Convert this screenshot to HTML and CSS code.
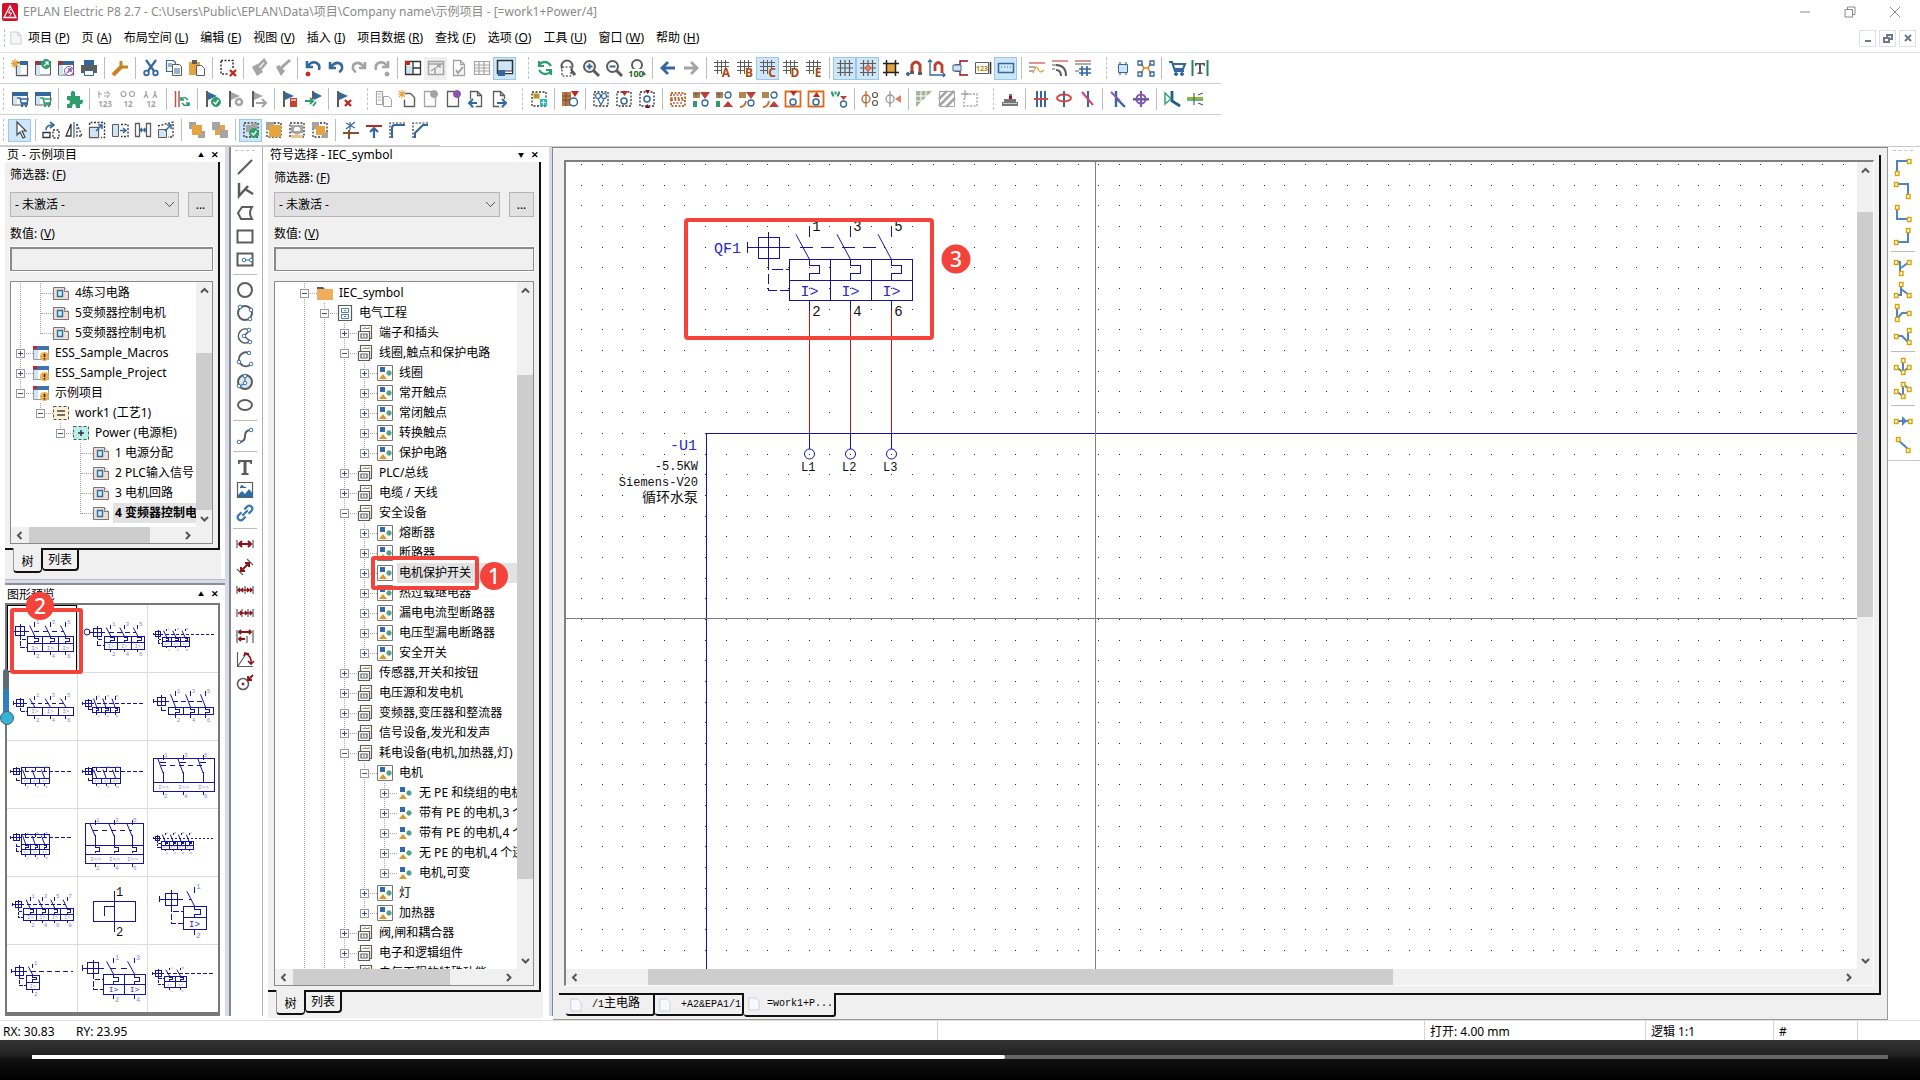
FILE: index.html
```html
<!DOCTYPE html>
<html lang="zh-CN">
<head>
  <meta charset="UTF-8">
  <meta name="viewport" content="width=device-width, initial-scale=1.0">
  <title>EPLAN Electric P8 2.7</title>
  <link rel="stylesheet" href="styles.css">
</head>
<body>
  <header>
    <div class="titlebar">
      <svg class="logo" viewBox="0 0 16 18"><rect width="16" height="18" rx="2" fill="#d2102e"/><path d="M8 3 14 14.500H2z" fill="none" stroke="#fff" stroke-width="1.300"/><path d="M8.500 6 6.500 10h3L7.500 13.500" fill="none" stroke="#fff"/></svg>
      <span class="app-title">EPLAN Electric P8 2.7 - C:\Users\Public\EPLAN\Data\项目\Company name\示例项目 - [=work1+Power/4]</span>
      <div class="win-buttons">
        <button aria-label="Minimize"><svg viewBox="0 0 12 12"><path d="M1 6h10"/></svg></button>
        <button aria-label="Restore"><svg viewBox="0 0 12 12"><path d="M1 3.500h7.500V11H1zM3.500 3.500V1H11v7.500H8.500"/></svg></button>
        <button aria-label="Close"><svg viewBox="0 0 12 12"><path d="M1 1l10 10M11 1 1 11"/></svg></button>
      </div>
    </div>
    <nav class="menubar">
      <span class="grip"></span>
      <svg class="page-icon" viewBox="0 0 14 16"><path d="M1 1h8l4 4v10H1z" fill="#f4f6fa" stroke="#c3c8d2"/><path d="M9 1v4h4" fill="none" stroke="#c3c8d2"/></svg>
      <a href="#">项目 (<u>P</u>)</a>
      <a href="#">页 (<u>A</u>)</a>
      <a href="#">布局空间 (<u>L</u>)</a>
      <a href="#">编辑 (<u>E</u>)</a>
      <a href="#">视图 (<u>V</u>)</a>
      <a href="#">插入 (<u>I</u>)</a>
      <a href="#">项目数据 (<u>R</u>)</a>
      <a href="#">查找 (<u>F</u>)</a>
      <a href="#">选项 (<u>O</u>)</a>
      <a href="#">工具 (<u>U</u>)</a>
      <a href="#">窗口 (<u>W</u>)</a>
      <a href="#">帮助 (<u>H</u>)</a>
      <div class="mdi-buttons">
        <button aria-label="Minimize page"><svg viewBox="0 0 10 10"><path d="M2 8h6"/></svg></button>
        <button aria-label="Restore page"><svg viewBox="0 0 10 10"><path d="M1 5h5v4H1zM4 5V2h5v4H6"/></svg></button>
        <button aria-label="Close page"><svg viewBox="0 0 10 10"><path d="M2 2l6 6M8 2 2 8"/></svg></button>
      </div>
    </nav>
    <div class="toolbar" data-tools=": new open edit print | wrench | cut copy paste | marquee | brush brushFill | undoAll undo redo redoAll | layout fullview# check table winBottom* : refresh zoomArea zoomIn zoomOut zoom100 | back forward | gridA gridB gridC* gridD gridE | grid* snap* alignGrid magnet magnetXY orthogonal dims input* | wave1 wave2 wave3 : device net | cart textT"></div>
    <div class="toolbar" data-tools=": navCart navCart2 | puzzle | num1 num2 num3 | sync | flagOk flagGear flagNext | flagRed flagSplit | flagDel : pages pageNew pageOff pageMark pagePrev pageNext : macroBox | macroRed | conn1 conn2 conn3 | term term2 term3 term4 term5 boxDown boxUp chain | pin1 pin2 | corner hatch newBox : stamp | bus cable slash | branch ring | diode splice"></div>
    <div class="toolbar last" data-tools=": pointer* | rotate mirror scale move stretch resize | front back2 | grpOk* grp1 grp2 grp3 | trim extend chamfer fillet"></div>
  </header>

  <main>
    <div class="left-col">
      <section class="panel pages">
        <div class="panel-title"><span>页 - 示例项目</span><button aria-label="Collapse">▲</button><button aria-label="Close panel">✕</button></div>
        <div class="panel-body">
          <label for="pageFilter">筛选器: (<u>F</u>)</label>
          <div class="filter-row">
            <select id="pageFilter"><option>- 未激活 -</option></select>
            <button>...</button>
          </div>
          <label for="pageValue">数值: (<u>V</u>)</label>
          <input type="text" id="pageValue">
          <div class="scroll-box">
            <ul class="tree" id="pageTree"></ul>
            <div class="scroll v" data-split="54 159 0"></div>
            <div class="scroll h" data-split="1 122 29"></div>
          </div>
        </div>
        <div class="tabs"><button class="on">树</button><button>列表</button></div>
      </section>
      <div class="splitter-h"></div>
      <section class="panel preview">
        <div class="panel-title"><span>图形预览</span><button aria-label="Collapse">▲</button><button aria-label="Close panel">✕</button></div>
        <div class="thumbs" id="thumbs"></div>
        <div class="mark mark-2"><b>2</b></div>
        <div class="gauge"></div>
      </section>
    </div>
    <div class="splitter-v"></div>
    <div class="vtools" data-tools=": line polyline polygon rect rectC | circle circle3 arcC arc3 sector ellipse | spline | text image link | dim dimAlign dimChain dimInc dimBase dimAngle dimRadius"></div>

    <section class="panel symbols">
      <div class="panel-title"><span>符号选择 - IEC_symbol</span><button aria-label="Collapse">▼</button><button aria-label="Close panel">✕</button></div>
      <div class="panel-body">
        <label for="symFilter">筛选器: (<u>F</u>)</label>
        <div class="filter-row">
          <select id="symFilter"><option>- 未激活 -</option></select>
          <button>...</button>
        </div>
        <label for="symValue">数值: (<u>V</u>)</label>
        <input type="text" id="symValue">
        <div class="scroll-box">
          <ul class="tree deep" id="symTree"></ul>
          <div class="scroll v" data-split="76 505 73"></div>
          <div class="scroll h" data-split="1 158 50"></div>
        </div>
      </div>
      <div class="tabs"><button class="on">树</button><button>列表</button></div>
    </section>
    <div class="splitter-v thin"></div>

    <section class="editor">
      <div class="doc">
        <div class="scroll-box">
          <svg class="sheet" id="sheet"></svg>
          <div class="scroll v" data-split="33 406 335"></div>
          <div class="scroll h" data-split="65 745 447"></div>
        </div>
      </div>
      <div class="doc-tabs">
        <button><svg class="page-icon" viewBox="0 0 14 16"><path d="M1 1h8l4 4v10H1z" fill="#f8f9fc" stroke="#c3c8d2"/></svg><span>/1<span class="cjk">主电路</span></span></button>
        <button><svg class="page-icon" viewBox="0 0 14 16"><path d="M1 1h8l4 4v10H1z" fill="#f8f9fc" stroke="#c3c8d2"/></svg><span>+A2&amp;EPA1/1</span></button>
        <button class="on"><svg class="page-icon" viewBox="0 0 14 16"><path d="M1 1h8l4 4v10H1z" fill="#f8f9fc" stroke="#c3c8d2"/></svg><span>=work1+P...</span></button>
      </div>
    </section>
    <div class="vtools right" data-tools=": angleRD angleLD angleRU angleLU | teeD teeU teeR teeL | jumpD jumpZ | arrowR diag"></div>
  </main>

  <div class="status">
    <span class="rx">RX: 30.83</span><span class="ry">RY: 23.95</span>
    <span class="st-open">打开: 4.00 mm</span><span class="st-logic">逻辑 1:1</span><span class="st-hash">#</span><span class="st-end"></span>
  </div>
  <footer class="player">
    <div class="progress"><i></i></div>
  </footer>
  <script src="script.js"></script>
</body>
</html>
```
FILE: styles.css
```css
* { box-sizing: border-box; }
body {
  margin: 0;
  height: 100vh;
  display: flex;
  flex-direction: column;
  overflow: hidden;
  background: #fff;
  color: #000;
  font: 12px/16px "Noto Sans", "Noto Sans CJK SC", sans-serif;
}
button, input, select { font: inherit; color: inherit; padding: 0; border-radius: 0; }
button { background: none; border: none; }
a { color: inherit; text-decoration: none; }
svg { display: block; }

/* title + menu */
.titlebar { display: flex; align-items: center; height: 24px; padding-left: 2px; color: #8a8a8a; }
.logo { width: 16px; height: 18px; margin-right: 5px; }
.app-title { flex: 1; white-space: nowrap; }
.win-buttons { display: flex; }
.win-buttons button { width: 45px; display: grid; place-items: center; }
.win-buttons svg { width: 12px; height: 12px; fill: none; stroke: #8a8a8a; }
.win-buttons button:last-child { margin-right: 3px; }
.menubar { display: flex; align-items: center; gap: 12px; height: 29px; border-bottom: 1px solid #e2e2e2; white-space: nowrap; }
.menubar .grip { height: 18px; margin: 0 -7px 0 4px; }
.grip { border-left: 1px dashed #c4c4c4; }
.page-icon { width: 14px; height: 16px; flex: none; }
.menubar .page-icon { width: 12px; margin-right: -6px; }
.mdi-buttons { display: flex; gap: 3px; margin: 0 4px 0 auto; }
.mdi-buttons button { width: 17px; height: 17px; border: 1px solid #dde1e6; display: grid; place-items: center; }
.mdi-buttons svg { width: 10px; height: 10px; fill: none; stroke: #6c7a89; stroke-width: 2; }

/* toolbars */
.toolbar { display: flex; align-items: center; width: 1221px; max-width: 100%; height: 31px; border-bottom: 1px solid #d0d0d0; overflow: hidden; }
.toolbar.last { width: 440px; }
.tool { width: 23px; height: 23px; flex: none; display: grid; place-items: center; border: 1px solid transparent; }
.tool svg { width: 18px; height: 18px; overflow: visible; }
.tool.on { background: #cfe6f8; border-color: #98c8ee; }
.tool.dim { background: #efefef; }
.sep { width: 8px; height: 22px; flex: none; background: linear-gradient(90deg, transparent 4px, #bdbdbd 4px, #bdbdbd 5px, transparent 5px); }
.toolbar .grip { height: 22px; width: 5px; flex: none; margin-left: 12px; }
.toolbar .grip:first-child { margin-left: 3px; }

/* work area */
main { flex: 1; min-height: 0; display: grid; grid-template-columns: 225px 6px 32px 286px 4px 1fr 32px; border-top: 1px solid #c8c8c8; }
.left-col { display: flex; flex-direction: column; min-height: 0; padding-left: 5px; }
.splitter-v { background: #d6dbe9; border-right: 2px solid #86868c; margin-bottom: 4px; }
.splitter-v.thin { border-right-width: 1px; }
.splitter-h { height: 6px; flex: none; background: #d6dbe9; border-top: 1px solid #b8bccb; border-bottom: 2px solid #8b8f9c; }
.panel { display: flex; flex-direction: column; min-height: 0; background: #fff; position: relative; }
.panel.pages { height: 432px; flex: none; }
.panel.preview { flex: 1; padding-bottom: 4px; }
.panel.symbols { padding: 0 8px 2px 5px; }
.panel-title { display: flex; align-items: center; height: 15px; flex: none; padding: 0 6px 0 2px; gap: 6px; }
.panel-title span { flex: 1; line-height: 15px; }
.panel-title button { width: 8px; font-size: 9px; line-height: 10px; }
.panel-title button:nth-of-type(1) { font-size: 6px; }
.panel-title button:nth-of-type(2) { font-weight: bold; }
.panel-body {
  flex: 1;
  min-height: 0;
  display: flex;
  flex-direction: column;
  background: #f0f0f0;
  border-right: 2px solid #111;
  border-bottom: 2px solid #111;
  padding: 5px 5px 4px 5px;
  margin-right: 5px;
}
.panel.symbols .panel-body { margin-right: 0; padding-left: 6px; }
.panel.symbols .panel-title { padding-right: 2px; }
.panel-body label { flex: none; }
.panel.symbols label:first-child { padding-top: 3px; margin-bottom: -3px; }
.filter-row { display: flex; gap: 9px; margin: 9px 0; flex: none; }
.filter-row select {
  flex: 1;
  min-width: 0;
  height: 25px;
  border: 1px solid #b4b4b4;
  background: #e1e1e1;
  padding-left: 4px;
  appearance: none;
  background-image: linear-gradient(45deg, transparent 46%, #555 46%, #555 56%, transparent 56%), linear-gradient(-45deg, transparent 46%, #555 46%, #555 56%, transparent 56%);
  background-size: 5px 5px;
  background-repeat: no-repeat;
  background-position: right 8px center, right 4px center;
}
.filter-row button { width: 25px; height: 25px; border: 1px solid #b4b4b4; background: #e1e1e1; }
.panel-body input { height: 24px; flex: none; margin-top: 5px; border: 2px solid #8a8a8a; border-right-width: 1px; border-bottom-width: 1px; outline: 1px solid #fff; background: #f0f0f0; width: 100%; }
.scroll-box { flex: 1; min-height: 0; min-width: 0; display: grid; grid-template: minmax(0, 1fr) 16px / minmax(0, 1fr) 16px; background: #f0f0f0; border: 1px solid #8a8a8a; }
.panel-body .scroll-box { margin-top: 10px; }

/* scrollbars */
.scroll { display: flex; background: #f0f0f0; }
.scroll.v { flex-direction: column; }
.scroll button { width: 16px; height: 17px; flex: none; display: grid; place-items: center; }
.scroll.h button { width: 17px; height: 16px; }
.scroll svg { width: 9px; height: 9px; fill: none; stroke: #555; stroke-width: 2; }
.scroll i { flex-basis: 0; }
.scroll .thumb { background: #cdcdcd; }

/* trees */
.tree { list-style: none; margin: 0; padding: 1px 0 0; background: #fff; overflow: hidden; white-space: nowrap; }
.tree.deep { padding-left: 20px; }
.tree li { display: flex; height: 20px; align-items: center; position: relative; }
.tree li > i { position: relative; width: 20px; height: 20px; flex: none; }
.tree i.line, .tree i.half { background: linear-gradient(#a8a8a8 50%, transparent 50%) 9px 0 / 1px 2px repeat-y; }
.tree i.half::before { content: ""; position: absolute; left: 0; top: 11px; width: 20px; height: 9px; background: #fff; }
.tree i.stub::after { content: ""; position: absolute; left: 10px; top: 10px; width: 12px; border-top: 1px dotted #a8a8a8; }
.tree button { position: absolute; z-index: 1; left: 5px; top: 6px; width: 9px; height: 9px; border: 1px solid #9a9a9a; background: linear-gradient(#3a5080, #3a5080) center / 5px 1px no-repeat, #fff; }
.tree button.plus { background: linear-gradient(#3a5080, #3a5080) center / 5px 1px no-repeat, linear-gradient(#3a5080, #3a5080) center / 1px 5px no-repeat, #fff; }
.tree li > svg { position: relative; width: 18px; height: 18px; flex: none; margin: 0 3px 0 1px; }
.tree span { padding: 1px 1px 1px 2px; line-height: 18px; }
.tree .sel { background: #e2e2e2; flex: 1; }
.tree .strong { font-weight: bold; }

/* tabs under panels */
.tabs { display: flex; align-items: flex-start; height: 29px; flex: none; background: #f0f0f0; padding-left: 8px; margin-right: 4px; }
.tabs button { height: 21px; padding: 0 5px; border: solid #111; border-width: 0 2px 2px 1px; border-radius: 0 0 4px 4px; background: #f0f0f0; }
.tabs .on { height: 25px; width: 29px; border-width: 0 1px 2px 1px; border-left-color: #999; margin-top: -2px; padding-top: 4px; }
.panel.symbols .tabs { margin-right: -2px; height: 26px; }

/* preview grid */
.panel.preview .panel-title { height: 18px; }
.thumbs { flex: 1; min-height: 0; margin-right: 5px; display: grid; grid-template-columns: repeat(3, 1fr); grid-template-rows: repeat(6, 1fr); gap: 1px; background: #dcdcdc; border: 2px solid #777; border-bottom-width: 4px; }
.thumbs button { background: #fff; display: block; min-height: 0; overflow: hidden; text-align: left; }
.thumbs button.on { outline: 1px solid #000; outline-offset: -1px; }
.thumbs svg { width: 70px; height: 67px; }
.draw { fill: none; stroke: #1414a0; shape-rendering: crispEdges; }
.slant { fill: none; stroke: #1414a0; }
.draw-text { font-family: "Liberation Mono", "Noto Sans CJK SC", monospace; fill: #111; }
.draw-text.blue { fill: #2a2acc; }
.draw-text.soft { fill: #8a8ad8; }

/* numbered callouts */
.mark { position: absolute; border: 4px solid #f4433a; border-radius: 3px; pointer-events: none; }
.mark b { position: absolute; width: 28px; height: 28px; border-radius: 50%; background: #f4433a; color: #fff; font-size: 21px; line-height: 28px; font-weight: 500; text-align: center; }
.mark-1 { left: 76px; top: -7px; width: 108px; height: 34px; z-index: 3; }
.mark-1 b { left: 105px; top: 2px; }
.mark-2 { left: 5px; top: 23px; width: 73px; height: 66px; }
.mark-2 b { left: 12px; top: -20px; }
.gauge { position: absolute; left: -2px; top: 84px; width: 6px; height: 48px; border-radius: 3px; background: linear-gradient(#5f6b73 20px, #2f7fc0 20px); }
.gauge::after { content: ""; position: absolute; left: -3px; bottom: -8px; width: 12px; height: 12px; border-radius: 50%; background: #34b3d4; border: 1px solid #46606e; }

/* vertical tool strips */
.vtools { display: flex; flex-direction: column; align-items: center; border-right: 1px solid #b0b0b0; padding: 3px 3px 5px 0; margin-bottom: 4px; }
.vtools.right { align-self: start; border-right: none; border-bottom: 1px solid #c8c8c8; margin: 0; }
.vtools .sep { width: 24px; height: 8px; background: linear-gradient(transparent 4px, #bdbdbd 4px, #bdbdbd 5px, transparent 5px); }
.vtools .grip { border: none; border-top: 1px dashed #c4c4c4; width: 20px; height: 5px; flex: none; }

/* editor */
.editor { display: flex; flex-direction: column; min-width: 0; min-height: 0; background: #f0f0f0; border-top: 1px solid #888; border-right: 1px solid #999; border-bottom: 1px solid #999; }
.doc { flex: 1; min-height: 0; display: flex; margin: 7px 6px 0 6px; border-right: 2px solid #111; border-bottom: 2px solid #111; padding: 5px 5px 7px 5px; }
.doc .scroll-box { border: 2px solid #808080; border-right: 1px solid #fff; border-bottom: 1px solid #fff; }
.sheet { width: 100%; height: 100%; background: #fff; min-width: 0; }
.doc-tabs { display: flex; align-items: flex-start; height: 24px; flex: none; padding-left: 13px; font: 10px/14px "Liberation Mono", "Noto Sans CJK SC", monospace; }
.doc-tabs .cjk { font-size: 12px; }
.doc-tabs button { display: flex; align-items: center; gap: 10px; width: 89px; height: 21px; padding-left: 4px; border: solid #111; border-width: 0 2px 2px 0; border-radius: 0 0 3px 3px; }
.doc-tabs .on { width: 92px; height: 24px; margin-top: -2px; gap: 7px; background: #f0f0f0; }
.doc-tabs .page-icon { width: 12px; height: 14px; }

/* status + player */
.status { display: flex; height: 20px; flex: none; padding-left: 3px; line-height: 22px; border-top: 1px solid #e0e0e0; }
.status span { border-left: 1px solid #d4d4d4; padding-left: 5px; white-space: nowrap; }
.status .rx { border: none; padding: 0; width: 73px; }
.status .ry { border: none; border-right: 1px solid #d4d4d4; padding: 0; width: 862px; }
.status .st-open { margin-left: auto; width: 221px; }
.status .st-logic { width: 128px; }
.status .st-hash { width: 84px; }
.status .st-end { width: 63px; }
.player { height: 40px; flex: none; background: linear-gradient(#333, #222 15px, #111 19px, #000); padding: 15px 32px; }
.progress { height: 4px; background: #666; }
.progress i { display: block; width: 52.400%; height: 4px; background: #fff; border-radius: 0 2px 2px 0; }
```
FILE: script.js
```js
(function() {
  const G = '#5c5c5c', B = '#33689e', R = '#c0281e', O = '#e6a440', N = '#2f9e6c', S = '#a4a4a4', C = '#cfe4f5', P = '#8a55b0', K = '#8e1118';
  // s = stroked path, f = filled path
  const s = (d, c = G, w = 1.5, x = '') => `<path d="${d}" fill="none" stroke="${c}" stroke-width="${w}" ${x}/>`;
  const f = (d, c = G) => `<path d="${d}" fill="${c}"/>`;
  const o = (x, y, r, c = G, w = 1.5, fill = 'none') => `<circle cx="${x}" cy="${y}" r="${r}" fill="${fill}" stroke="${c}" stroke-width="${w}"/>`;
  const t = (str, x, y, c, size) => `<text x="${x}" y="${y}" fill="${c}" font-size="${size}" font-weight="bold" text-anchor="middle">${str}</text>`;
  const dash = 'stroke-dasharray="2 1.5"';

  const win = f('M1 2h16v4H1z', B) + f('M1 2h4v4H1z', R) + s('M1.500 3v13h15V3', G, 1) + f('M2 6h4v10H2z', C);
  const winPlain = f('M1 2h16v4H1z', B) + s('M1.500 3v12h15V3', G, 1) + f('M2 6h4v8H2z', C);
  const sheet = (c) => s('M3.500 1.500h7l4 4v11h-11zM10.500 1.500v4h4', c, 1.3);
  const flag = (c) => f('M2 1h2v16H2z', G) + f('M4 2l9 4-9 4z', c);
  const hash = s('M4.500 1v14M8.500 1v14M12.500 1v8M1 3.500h15M1 7.500h15M1 11.500h7', G, 1);
  const gridLines = s('M4.500 1v16M9 1v16M13.500 1v16M1 4.500h16M1 9h16M1 13.500h16', G, 1.2);
  const lens = (c) => o(7.500, 7.500, 5.500, c, 2) + s('M11.500 11.500 17 17', c, 3);
  const cart = (c) => s('M6 8h3l1.500 6H16M10 9h7l-1 4h-5.500', c, 1.5) + f('M10 15h2v2h-2zM14 15h2v2h-2z', c);
  const tick = o(12, 12, 4.500, N, 1, N) + s('M9.500 12l2 2 3-4', '#fff', 1.4);
  const cross = s('M10 10l6 6M16 10l-6 6', R, 2.4);
  const box = s('M2 2h14v14H2z', '#333', 1.3, dash);
  const pins = f('M6 1h7L9.500 6z', R);
  const relay = f('M1 2h7v6H1z', '#b0854e') + s('M1 4h7M4 2v6', G, .8) + f('M1 11h4v6H1z', N);
  const tri = f('M8 2h10l-5 7z', '#b8423a');
  const triUp = f('M8 17h10l-5-6z', '#b8423a');
  const q = (x, y) => `<rect x="${x - 1.5}" y="${y - 1.5}" width="3.500" height="4" fill="#fff" stroke="#d6a400" stroke-width="1.400"/>`;
  const wire = (d, pts) => s(d, '#4f84c4', 2) + pts.map(p => q(p[0], p[1])).join('');
  const letter = (l) => hash + t(l, 13, 18, '#a84a10', 12);
  const node = (x, y) => o(x, y, 1.8, '#3572ad', 1, '#fff');

  const icons = {
    new: s('M5.500 3.500h11v13h-11z', G, 1.3) + f('M9 2h8v4H9z', B) + f('M6 6h4v10H6z', C) + s('M4 0v9M0 4.500h9M1 1.500l6 6M7 1.500l-6 6', O, 1.3),
    open: win + o(12, 5, 4.5, N, 1, N) + s('M10 7l4-4M11 3h3v3', '#fff', 1.2),
    edit: win + o(12, 12, 4.5, P, 1, '#fff') + s('M10 14l4-4M11 10h3v3', P, 1.5),
    print: f('M4 1h10v5H4z', B) + f('M1 6h16v8H1z', G) + `<path d="M4.500 11.500h9v5h-9z" fill="#fff" stroke="${B}"/>`,
    wrench: s('M2 16 11 7', '#c98324', 4) + s('M10 2v6h7', '#c98324', 3),
    cut: s('M4 1l8 11M14 1 6 12', B, 2.2) + o(4.5, 14, 2.3, B, 1.8) + o(13.5, 14, 2.3, B, 1.8),
    copy: s('M1.500 1.500h7l2 2v9h-9z', B, 1.2) + `<path d="M7.500 5.500h7l2 2v9h-9z" fill="#fff" stroke="${G}"/>` + s('M3 5h4M3 7h4M9 10h6M9 12h6M9 14h6', B, 1),
    paste: f('M1 3h11v13H1z', O) + f('M4 1h5v4H4z', G) + `<path d="M8.500 6.500h5l3 3v7h-8z" fill="#fff" stroke="${G}"/>`,
    marquee: s('M2 1.500h12v8M2 2v13h8', '#333', 1.5, dash) + s('M11 11l6 6M17 11l-6 6', R, 2.4),
    brush: s('M7 8l7-7 2 3-6 7z', S, 2.5) + f('M2 8l5-3 6 8-6 4z', S),
    brushFill: s('M17 1 8 9', S, 3) + f('M3 8l3-2 6 6-4 5z', S),
    undo: s('M3 3v6h6', B, 2.6) + s('M4 8C9 1 16 4 15 10q-1 2-3 3', B, 2.6),
    undoAll: s('M3 2v6h6', B, 2.6) + s('M4 7C9 0 17 4 15 11', B, 2.6) + o(4, 15, 2, R, 1, R),
    redo: s('M15 3v6H9', S, 2.6) + s('M14 8C9 1 2 4 3 10q1 2 3 3', S, 2.6),
    redoAll: s('M15 2v6H9', S, 2.6) + s('M14 7C9 0 1 4 3 11', S, 2.6) + o(14, 15, 2, S, 1, S),
    layout: f('M2 7h6v8H2z', C) + s('M1.500 2.500h15v13h-15zM9 3v13M9 9h8', '#333', 1.3) + f('M1 2h5v4H1z', R),
    fullview: s('M1.500 2.500h15v13h-15zM1 5h16M8 9v6M4 12l9-6M10 6h3v3', S, 1.5),
    check: sheet(S) + s('M6 11l2 3 5-6', S, 2),
    table: s('M1.500 2.500h15v13h-15zM1 6h16M1 9h16M1 12h16M6 2v14M11 2v14', S, 1.2),
    winBottom: s('M1.500 1.500h15v13h-15z', '#333', 1.5) + f('M2 11h7v6H2z', B) + f('M9 12h7v2H9z', '#fff') + s('M9 12h7', '#333', 1),
    refresh: s('M15 7Q11 1 5 4L3 7M3 2v5h5M3 11q4 6 10 3l2-3M15 16v-5h-5', N, 2.2),
    zoomArea: o(8, 7, 5.5, G, 2) + s('M12 11l4 5', G, 3) + `<path d="M3 8h9v9H3z" fill="#fff" stroke="#222" ${dash}/>`,
    zoomIn: lens(G) + s('M4.500 7.500h6M7.500 4.500v6', B, 2),
    zoomOut: lens(G) + s('M4.500 7.500h6', B, 2),
    zoom100: o(9, 6, 5, G, 2) + s('M12 10l5 6', G, 2.5) + f('M1 10h14v8H1z', '#fff') + t('100', 8, 18, '#1e6a28', 9),
    back: s('M16 9H4M9 3 3 9l6 6', B, 2.8), forward: s('M2 9h12M9 3l6 6-6 6', S, 2.8),
    gridA: letter('A'), gridB: letter('B'), gridC: letter('C'), gridD: letter('D'), gridE: letter('E'),
    grid: gridLines,
    snap: gridLines + o(9, 9, 2.5, '#d9652b', 1, '#e77'),
    alignGrid: f('M4 4h10v10H4z', O) + s('M4.500 1v16M13.500 1v16M1 4.500h16M1 13.500h16', '#222', 1.5),
    magnet: s('M7 13V6q4-6 8 0v9', '#b4432f', 3) + o(3, 15, 1.5, B, 1, B) + f('M5 12h4v3H5zM13 13h4v3h-4z', G),
    magnetXY: s('M2 1v15h15M0 3l2-2 2 2M15 14l2 2-2 2', B, 1.3) + s('M7 12V6q3-5 7 0v8', '#b4432f', 2.8),
    orthogonal: s('M17 2H9v4H4M17 16H9v-4H4', K, 1.4) + `<path d="M2 6h8v6H2z" fill="${C}" stroke="${B}"/>`,
    dims: s('M1.500 3.500h13v11h-13z', G, 1) + t('123', 8, 12, '#b88a00', 7) + s('M16.500 3v12', '#333', 1.6),
    input: s('M1.500 4.500h15v9h-15z', B, 1.5) + s('M4 8h10', B, 1, 'stroke-dasharray="1 2"'),
    wave1: s('M1 8h6', G, 1) + s('M1 4h16', R, 1) + s('M1 12h4', G, 1) + s('M5 14q3-9 5-4t6 1', O, 1.5),
    wave2: s('M1 2h16', R, 1) + s('M1 6h5M1 10h3', G, 1) + s('M5 6q10 0 10 11M5 11q5 0 5 6', G, 2),
    wave3: s('M1 2h16', R, 1) + s('M1 5h16', G, 1) + s('M8 7v10M13 7v10M5 10h12M5 14h12', B, 1.7) + s('M1 12h4', G, 1),
    device: `<path d="M4.500 5.500h9v8h-9z" fill="${C}" stroke="${B}"/>` + s('M6 3v2M12 3v2M6 14v2M12 14v2', B, 1.2),
    net: s('M4 4l3 5-3 6M14 4l-3 5 3 6M7 9h4', '#d08a2a', 1.5) + s('M1 2h4v4H1zM13 2h4v4h-4zM1 13h4v4H1zM13 13h4v4h-4z', B, 1.3),
    cart: s('M1 3h3l3 9h9M5 5h12l-2 5H6', B, 2.2) + o(8, 15, 1.5, B, 1, B) + o(14, 15, 1.5, B, 1, B),
    textT: s('M1.500 1v16M16.500 1v16', '#2a8064', 2) + f('M4 4h10v3h-1l-1-1.500h-2v8h1.500V15h-5v-1.500H8v-8H6L5 7H4z', '#555'),

    navCart: winPlain + cart(B), navCart2: winPlain + cart(N),
    puzzle: f('M2 6h4q-1-5 2-5t2 5h5v4q4-1 3 2t-3 2v4h-4q0-4-2-4t-2 4H2v-4q3 0 3-2T2 10z', N),
    num1: s('M3 1v7M2 4h4M11 1q5 3 0 7M8 3h5M8 6h5', S, 1) + t('123', 9, 17, S, 8),
    num2: o(4.5, 4, 2.5, S, 1.2) + o(13, 4, 2.5, S, 1.2) + t('12', 9, 17, S, 8),
    num3: s('M4 1v4M13 1v4M2 8l2-4 2 4M11 8l2-4 2 4', S, 1.4) + t('12', 9, 17, S, 8),
    sync: s('M2.500 1v16M6 1v16', '#b9544a', 1.5) + s('M15 10q-4-5-7 0M8 7v3h3M9 13q4 5 7 0M16 16v-3h-3', N, 1.7),
    flagOk: flag(B) + tick, flagGear: flag(S) + o(12, 12, 3, S, 2.5), flagNext: flag(S) + s('M6 13h9M12 9l4 4-4 4', S, 2),
    flagRed: flag(B) + f('M9 8h7v9H9z', '#c2432f') + s('M10 10h5', '#fff', 1.2),
    flagSplit: f('M8 1h2v8H8z', G) + f('M10 2l8 4-8 4z', B) + s('M1 11h8M6 8l3 3-3 3M9 16l3-4', N, 2),
    flagDel: flag(B) + cross,
    pages: s('M1.500 1.500h6v13h-6zM3 4h3M3 7h3M3 10h3', S, 1.2) + `<path d="M8.500 6.500h5l3 3v7h-8z" fill="#fff" stroke="${S}"/>`,
    pageNew: s('M6.500 3.500h6l4 4v9h-10v-7', G, 1.4) + s('M4 0v8M0 4h8M1 1l6 6M7 1 1 7', O, 1.1),
    pageOff: sheet(S) + o(13, 4, 3.5, S, 1, S), pageMark: sheet(G) + o(13, 4, 3.5, P, 1, P),
    pagePrev: sheet(G) + f('M0 9h9v8H0z', '#fff') + s('M10 13H2M6 9l-4 4 4 4', B, 2),
    pageNext: sheet(G) + f('M9 9h9v8H9z', '#fff') + s('M7 13h9M12 9l4 4-4 4', B, 2),
    macroBox: box + f('M3 3h7v6H3z', '#f1cd4c') + f('M10 9h7v7h-7z', '#24c0b4') + s('M11 12.500h5M13.500 10v5', '#fff', 1) + s('M4 5h5M4 7h5', G, 1),
    macroRed: f('M1 2h9v14H1z', '#b97a4b') + s('M1 6h9M1 10h9M5 2v14', '#7e4826', 1) + f('M10 1h8l-4 6z', R) + o(12.5, 12, 4, B, 1.5, '#fff'),
    conn1: box + o(6, 6, 2.5, B, 1.2) + o(12, 6, 2.5, B, 1.2) + s('M6 9l3 6 3-6', B, 1.2),
    conn2: box + pins + o(9, 11, 3, B, 1.5), conn3: box + f('M7 0h5L9.500 4zM7 18h5l-2.500-4z', K) + o(9, 9, 3, B, 1.5),
    term: s('M2 3h14v5H2zM2 10h14v6H2z', '#c07034', 2, dash) + s('M4 5h10M4 13h10', K, 1, dash),
    term2: relay + tri + o(13, 13, 3, B, 1.3), term3: relay + o(13, 5, 3, B, 1.3) + triUp,
    term4: f('M1 2h7v6H1z', '#b0854e') + s('M2 17q5 0 6-6', '#c07034', 1.8) + tri + o(13, 13, 3, B, 1.3),
    term5: f('M1 2h7v6H1z', '#b0854e') + s('M2 17q5 0 6-6', '#c07034', 1.8) + o(13, 5, 3, B, 1.3) + triUp,
    boxDown: s('M1.500 1.500h15v15h-15z', '#de6a22', 1.8) + pins + o(9, 12, 3, B, 1.5),
    boxUp: s('M1.500 1.500h15v15h-15z', '#de6a22', 1.8) + f('M6 7h7L9.500 2z', R) + o(9, 12, 3, B, 1.5),
    chain: s('M1 3h10M2 5h3M7 5h3', N, 3, dash) + f('M10 6h7l-3.500 4z', '#b8423a') + o(13.5, 14, 3, B, 1.3),
    pin1: o(5, 9, 4, '#b66a35', 1.3) + s('M5 1v16', '#b66a35', 1.3) + o(14, 5, 2.5, G, 1.2) + o(14, 13, 2.5, G, 1.2),
    pin2: o(6, 9, 4, '#999', 1.3) + s('M6 1v16', '#999', 1.3) + f('M17 5v8l-6-4z', '#e08060'),
    corner: f('M1 1h16L1 17z', '#a9b39a') + s('M1 6h12M1 11h7M6 1v12M11 1v7', '#fff', 1),
    hatch: s('M1.500 1.500h15v15h-15z', S, 1) + s('M1 9l8-8M1 16 16 1M8 17l9-9', S, 2.5),
    newBox: s('M5 4h11v12H3V8', S, 1.4, dash) + s('M4 0v8M0 4h8', S, 1.3),
    stamp: f('M8 4h3v5h4v3H3V9h5zM1 12h16v4H1z', '#777') + s('M2 13.500h14', '#ccc', 1) + f('M8 6h3v3H8z', K),
    bus: s('M5 1v16M9 1v16M13 1v16', B, 2) + s('M2 9h14', '#d24747', 2),
    cable: s('M9 1v16', B, 2) + `<ellipse cx="9" cy="8" rx="7" ry="3.500" fill="none" stroke="#d24747" stroke-width="2"/>`,
    slash: s('M10 1v16', B, 2) + s('M4 2l11 13', '#d24770', 2),
    branch: s('M7 1v16M7 8l9 9', B, 2.4) + s('M2 2l9 9', P, 2), ring: s('M9 1v16M1 9h16', P, 2) + o(9, 9, 4.5, P, 2) + s('M1 10h16', B, 1),
    diode: s('M9 1v10l8 5', '#1c5f87', 2.8) + s('M2 3v11l6-5z', N, 1.4), splice: s('M1 8h16', '#9cb62a', 2.2) + s('M1 10h16', N, 1.5) + s('M8 3v12M12 5l5-2M12 13l5 2', G, 1.2),

    pointer: `<path d="M6 1v13l3-3 3 6 2-1-3-6h4z" fill="#fff" stroke="#444" stroke-width="1.200"/>`,
    rotate: s('M1 11.500h7v5H1z', '#333', 1.3) + s('M11 9h6v8h-6z', '#333', 1.3, dash) + s('M4 9q0-5 7-5M8 1l4 3-4 3', B, 1.6),
    mirror: s('M9 1v16', B, 1.2) + s('M6 3v12H1z', '#333', 1.3) + s('M12 3v12h5z', '#333', 1.3, dash),
    scale: s('M1.500 6.500h9v10h-9z', G, 1.3) + f('M2 7h8v9H2z', C) + s('M1.500 4V1.500h15v15H13', '#333', 1.3, dash) + s('M8 10l6-6M10 4h4v4', B, 1.6),
    move: `<path d="M1.500 3.500h6v12h-6z" fill="${C}" stroke="${G}"/>` + s('M10 3.500h7v12h-7', '#333', 1.3, dash) + s('M9 9.500h5M12 7l3 2.500-3 2.500', B, 1.5),
    stretch: s('M1.500 2.500h4v13h-4zM12.500 2.500h4v13h-4z', G, 1.3) + s('M6 9h6M8 7 6 9l2 2M10 7l2 2-2 2', B, 1.4),
    resize: `<path d="M1.500 8.500h8v8h-8z" fill="${C}" stroke="${G}"/>` + s('M1 5l15-4v15h-5', '#333', 1.3, dash) + s('M8 10l6-6M10 4h4v4', B, 1.5),
    front: f('M1 1h7v7H1zM10 10h7v7h-7z', S) + f('M4 4h10v10H4z', O), back2: f('M4 4h10v10H4z', O) + f('M1 1h8v8H1zM9 9h8v8H9z', S),
    grpOk: box + f('M4 4h7v7H4z', S) + f('M9 2h6v6H9z', S) + tick, grp1: box + f('M1 1h8v8H1z', S) + f('M4 4h12v12H4z', O),
    grp2: box + s('M4 5h10v6H4z', S, 2) + o(9, 9, 4, S, 1.5) + f('M3 14h12v3H3z', '#e9c48d'), grp3: box + f('M1 1h7v7H1zM11 11h6v6h-6z', S) + f('M5 5h9v9H5z', O),
    trim: s('M7 9v9M1 12h16', '#85502e', 2) + s('M4 2l9 5M13 1 4 8M8 1v8', B, 1.2), extend: s('M1 5h16', R, 2) + s('M9 17V8M5 11l4-4 4 4', B, 2.2),
    chamfer: s('M2 17V2h15', '#333', 1.2, dash) + s('M4 17V7q0-3 3-3h10', B, 2), fillet: s('M2 17V2h15', '#333', 1.2, dash) + s('M4 17v-5l8-8h5', B, 2),

    line: s('M2 16 16 2', G, 2.2), polyline: s('M3 2v13L12 5M9 8l8 5', G, 2.5), polygon: s('M16 3H6L2 9l3 6h11q-4-6 0-12z', G, 2),
    rect: s('M1.500 3.500h15v12h-15z', G, 2), rectC: s('M1.500 3.500h15v12h-15z', G, 2) + s('M8 10h6', '#3572ad', 1) + node(8, 10) + node(15, 10),
    circle: o(9, 9, 7, G, 2), circle3: o(9, 9, 7, G, 2) + node(4, 3) + node(15, 6) + node(14, 15),
    arcC: s('M13 3A7 7 0 1 0 13 15M13 4l-5 5 6 5', G, 1.6) + node(13, 3) + node(8, 9) + node(14, 15),
    arc3: s('M13 3A7 7 0 1 0 14 15', G, 2) + node(13, 3) + node(3, 12) + node(15, 14),
    sector: o(9, 9, 7, G, 2, '#dce8f4') + s('M9 2v8l-6 4', '#3572ad', 1.2) + node(9, 3) + node(9, 10) + node(3, 13),
    ellipse: `<ellipse cx="9" cy="9" rx="7" ry="5" fill="none" stroke="${G}" stroke-width="2"/>`,
    spline: s('M3 15q6 0 6-6t6-6', G, 2) + node(3, 15) + node(15, 3),
    text: f('M2 2h14v4h-1.500q0-2-2-2H10.500v11h2v2h-7v-2h2V4H5.500q-2 0-2 2H2z', G),
    image: s('M1.500 1.500h15v15h-15z', G, 1.2) + f('M2 14l4-4 3 3 4-5 4 5v3H2zM4 6q2-4 4 0 3-1 2 1H4z', '#2d6ca8'),
    link: '<g transform="rotate(-45 9 9)">' + s('M7 6H3a3 3 0 0 0 0 6h4M11 6h4a3 3 0 0 1 0 6h-4M5 9h8', '#3c78b4', 2.2) + '</g>',
    dim: s('M1 5v8M17 5v8', G, 1.2) + s('M3 9h12M6 6 3 9l3 3M12 6l3 3-3 3', K, 2),
    dimAlign: s('M1 11l6 6M11 1l6 6', G, 1.2) + s('M5 13 13 5M5 9v4h4M9 5h4v4', K, 2),
    dimChain: s('M1 5v8M9 5v8M17 5v8', G, 1.2) + s('M2 9h14M4 7 2 9l2 2M7 7l-2 2 2 2M11 7l2 2-2 2M14 7l2 2-2 2', K, 1.4),
    dimInc: s('M1 5v8M6 5v8M12 5v8M17 5v8', G, 1.2) + s('M2 9h14M4 7l2 2-2 2M9 7l2 2-2 2M14 7l2 2-2 2', K, 1.4),
    dimBase: s('M1 3v13M17 3v13M11 9v7', G, 1.2) + s('M3 5h12M5 3 3 5l2 2M13 3l2 2-2 2M3 12h6M5 10l-2 2 2 2', K, 1.8),
    dimAngle: s('M1.500 2v14.500H17M2 16 10 4', G, 1.2) + s('M9 3q7 3 6 11M8 6l1-3 4 1M12 11l3 3 3-3', K, 1.6),
    dimRadius: o(7, 11, 5.5, G, 1.6) + o(7, 11, 1, K, 1, K) + s('M17 2l-5 5M12 3v4h4', K, 1.8),

    angleRD: wire('M3 15V3h11', [[3, 15], [15, 3]]), angleLD: wire('M2 3h12v11', [[2, 3], [14, 15]]),
    angleRU: wire('M3 3v12h11', [[3, 3], [15, 15]]), angleLU: wire('M2 15h12V3', [[2, 15], [14, 3]]),
    teeD: wire('M2 4h4v10M7 10l8-6', [[2, 4], [15, 4], [7, 15]]), teeU: wire('M2 14h5V3M7 8l8 6', [[2, 14], [15, 14], [7, 3]]),
    teeR: wire('M3 3v12l5-6h7', [[3, 2], [3, 15], [15, 9]]), teeL: wire('M2 9h6l6 6V3', [[2, 9], [15, 3], [15, 15]]),
    jumpD: wire('M9 2v12M2 9l7 5 6-5', [[9, 2], [2, 9], [15, 9], [9, 14]]), jumpZ: wire('M2 10l7 5V3l6 5', [[2, 10], [9, 15], [9, 3], [15, 8]]),
    arrowR: wire('M2 9h12', [[2, 9], [16, 9]]) + f('M8 4v10l5-5z', '#4f84c4'), diag: wire('M3 4l11 10', [[4, 4], [14, 15]]),

    chip: '<path d="M1.500 3.500h11l4 4v8h-15z" fill="#f3ddd2" stroke="#777"/><path d="M12.500 3.500v4h4" fill="#fff" stroke="#777"/><path d="M5.500 6.500h5v6h-5z" fill="#c6f0f5" stroke="#2f6da6" stroke-width="1.400"/>',
    project: '<path d="M1.500 3.500h15v12h-15z" fill="#fff" stroke="#999"/><path d="M1 2h16v4H1z" fill="#3f74ae"/><path d="M1 2h4v3H1z" fill="#d02020"/><path d="M2 6h4v9H2z" fill="#cfe4f5"/><circle cx="12.500" cy="12.500" r="4.500" fill="#f0ae4c"/><path d="M12.500 10v3M12.500 14v1.500" stroke="#222" stroke-width="1.500"/>',
    plant: '<path d="M1.500 2.500h15v13h-15z" fill="#fdf0d2" stroke="#555" stroke-dasharray="3 2"/><path d="M5 7h8M5 11h8" stroke="#444" stroke-width="1.500"/>',
    place: '<path d="M1.500 2.500h15v13h-15z" fill="#b5f0ea" stroke="#555" stroke-dasharray="3 2"/><path d="M6 9h6M9 6v6" stroke="#333" stroke-width="1.500"/>',
    folder: f('M1 3h6l2 2H1z', G) + f('M1 5h16v11H1z', '#efae5a'),
    trade: s('M2.500 1.500h13v15h-13z', G, 1.2) + s('M5.500 4.500h7v4h-7zM5.500 10.500h7v4h-7zM8 6.500h2M8 12.500h2', '#4b7ea8', 1),
    group: s('M4.500 7V1.500h11v13H14M2.500 7.500h11v9h-11zM5 10h6v4H5zM7 12h2', G, 1.2) + s('M6.500 4.500h7', '#888', 1) + s('M8 4h2M12 4h2', O, 1.5),
    shapes: f('M4 3h5v5H4z', '#3568a8') + f('M3 15l4-5 4 5z', '#dd9526') + o(13, 9, 2.2, '#4fa383', 1, '#4fa383')
  };
  icons.family = s('M1.500 1.500h15v15h-15z', '#777', 1) + icons.shapes;
  const svg = (name) => `<svg viewBox="0 0 18 18">${icons[name]}</svg>`;

  document.querySelectorAll('[data-tools]').forEach(bar => {
    bar.innerHTML = bar.dataset.tools.split(' ').map(item => {
      if (item === '|') return '<span class="sep"></span>';
      if (item === ':') return '<span class="grip"></span>';
      const name = item.replace(/[*#]/, '');
      const state = item.endsWith('*') ? ' on' : item.endsWith('#') ? ' dim' : '';
      return `<button class="tool${state}" aria-label="${name}">${svg(name)}</button>`;
    }).join('');
  });

  // scrollbars: before / thumb / after
  document.querySelectorAll('.scroll').forEach(bar => {
    const [a, b, c] = bar.dataset.split.split(' ');
    const v = bar.classList.contains('v');
    const arrow = (d, label) => `<button aria-label="${label}"><svg viewBox="0 0 9 9"><path d="${d}"/></svg></button>`;
    bar.innerHTML = arrow(v ? 'M1 6.500 4.500 3 8 6.500' : 'M6.500 1 3 4.500 6.500 8', 'Scroll back') +
      `<i style="flex-grow:${a}"></i><i class="thumb" style="flex-grow:${b}"></i><i style="flex-grow:${c}"></i>` +
      arrow(v ? 'M1 3l3.500 3.500L8 3' : 'M3 1l3.500 3.500L3 8', 'Scroll forward');
  });

  // guides: | line, . blank; node: + - closed/open, P M same but last, t l leaf / last leaf
  const row = ([guides, icon, text, cls = '']) => {
    let out = '';
    for (const g of guides) {
      if (g === '|') out += '<i class="line"></i>';
      else if (g === '.') out += '<i></i>';
      else {
        const half = 'PMl'.includes(g) ? 'half' : 'line';
        const btn = '+P'.includes(g) ? '<button class="plus" aria-label="Expand"></button>' : '-M'.includes(g) ? '<button aria-label="Collapse"></button>' : '';
        out += `<i class="${half} stub">${btn}</i>`;
      }
    }
    const mark = cls === 'sel' ? '<div class="mark mark-1"><b>1</b></div>' : '';
    return `<li>${out}${svg(icon)}<span class="${cls}">${text}</span>${mark}</li>`;
  };
  document.getElementById('pageTree').innerHTML = [
    ['|t', 'chip', '4练习电路'], ['|t', 'chip', '5变频器控制电机'], ['|l', 'chip', '5变频器控制电机'],
    ['+', 'project', 'ESS_Sample_Macros'], ['+', 'project', 'ESS_Sample_Project'], ['M', 'project', '示例项目'],
    ['.M', 'plant', 'work1 (工艺1)'], ['..M', 'place', 'Power (电源柜)'],
    ['...t', 'chip', '1 电源分配'], ['...t', 'chip', '2 PLC输入信号'], ['...t', 'chip', '3 电机回路'], ['...l', 'chip', '4 变频器控制电', 'sel strong']
  ].map(row).join('');
  document.getElementById('symTree').innerHTML = [
    ['-', 'folder', 'IEC_symbol'], ['|-', 'trade', '电气工程'],
    ['||+', 'group', '端子和插头'], ['||-', 'group', '线圈,触点和保护电路'],
    ['|||+', 'family', '线圈'], ['|||+', 'family', '常开触点'], ['|||+', 'family', '常闭触点'], ['|||+', 'family', '转换触点'], ['|||P', 'family', '保护电路'],
    ['||+', 'group', 'PLC/总线'], ['||+', 'group', '电缆 / 天线'], ['||-', 'group', '安全设备'],
    ['|||+', 'family', '熔断器'], ['|||+', 'family', '断路器'], ['|||+', 'family', '电机保护开关', 'sel'], ['|||+', 'family', '热过载继电器'],
    ['|||+', 'family', '漏电电流型断路器'], ['|||+', 'family', '电压型漏电断路器'], ['|||P', 'family', '安全开关'],
    ['||+', 'group', '传感器,开关和按钮'], ['||+', 'group', '电压源和发电机'], ['||+', 'group', '变频器,变压器和整流器'], ['||+', 'group', '信号设备,发光和发声'],
    ['||-', 'group', '耗电设备(电机,加热器,灯)'], ['|||-', 'family', '电机'],
    ['||||+', 'shapes', '无 PE 和绕组的电机'], ['||||+', 'shapes', '带有 PE 的电机,3 个'], ['||||+', 'shapes', '带有 PE 的电机,4 个'], ['||||+', 'shapes', '无 PE 的电机,4 个连'], ['||||P', 'shapes', '电机,可变'],
    ['|||+', 'family', '灯'], ['|||P', 'family', '加热器'],
    ['||+', 'group', '阀,闸和耦合器'], ['||+', 'group', '电子和逻辑组件'], ['||+', 'group', '电气工程的特殊功能']
  ].map(row).join('');

  // multi-pole protection switch: handle h = [x, y, half size], box at x,y, pitch p, n poles,
  // rows: t = thermal release, i = magnetic release
  function breaker({ h, x, y, p, n, rows = 'ti', rh, tail, label = 6, frame = 0 }) {
    const [hx, hy, hs] = h, k = y - frame / 2 - hy || 3;
    const rise = frame ? 4 : k;
    let d = `M${x} ${y}h${p * n}v${rh * rows.length}h${-p * n}z`;
    let slant = '', text = '';
    d += `M${hx - hs} ${hy - hs}h${2 * hs}v${2 * hs}h${-2 * hs}zM${hx - 2 * hs} ${hy}h${4 * hs}M${hx - 2 * hs} ${hy - hs / 2}v${hs}M${hx} ${hy - 1.5 * hs}v${2.5 * hs}`;
    [...rows].forEach((kind, r) => {
      const ry = y + r * rh;
      if (r) d += `M${x} ${ry}h${p * n}`;
      for (let i = 0; i < n; i++) {
        const px = x + p * (i + .5);
        if (i) d += `M${x + p * i} ${ry}v${rh}`;
        if (kind === 't') d += `M${px} ${ry}v${rh * .3}h${p * .25}v${rh * .4}h${-p * .25}v${rh * .3}`;
        else text += `<text class="draw-text ${rh > 9 ? 'blue' : 'soft'}" x="${px}" y="${ry + rh * .8}" font-size="${Math.max(4, Math.round(rh * .75))}" text-anchor="middle">I&gt;</text>`;
      }
    });
    const bottom = y + rh * rows.length;
    for (let i = 0; i < n; i++) {
      const px = x + p * (i + .5);
      d += `M${px} ${y - rise * 2.75}v${rise * .9}M${px} ${bottom}v${rh * .5}`;
      slant += `M${px - p * .33} ${y - rise * 2.1}L${px} ${y}`;
      text += `<text class="draw-text ${label < 10 ? 'soft' : ''}" x="${px + label / 5}" y="${y - rise * 2.4}" font-size="${label}">${2 * i + 1}</text>` +
        `<text class="draw-text ${label < 10 ? 'soft' : ''}" x="${px + label / 5}" y="${bottom + label + 1}" font-size="${label}">${2 * i + 2}</text>`;
    }
    if (frame) d += `M${x} ${y}v${-frame}h${p * n}v${frame}`;
    const link = [...rows].map((_, r) => `M${hx} ${y + rh * (r ? r - .3 : .5) - (r ? 0 : hs)}V${y + rh * (r + .5)}H${x}`).join('');
    return `<path class="draw" d="${d}"/><path class="slant" d="${slant}"/>` +
      `<path class="draw" stroke-dasharray="${hs * 1.2} ${hs * .8}" d="M${hx + 3 * hs} ${hy}H${tail || x + p * (n - .5) - p * .15}"/>` +
      `<path class="draw" stroke-dasharray="${hs} ${hs * .35}" d="${link}"/>${text}`;
  }

  const tag = (x, y, str, size = 6) => `<text class="draw-text ${size < 10 ? 'soft' : ''}" x="${x}" y="${y}" font-size="${size}">${str}</text>`;
  // three-pole contact block with a frame round it
  const block = (x, y, w, h, poles, lines) => {
    const d = poles.map(p => `M${p} ${y - 3}v5M${p} ${lines[0]}v-10M${p} ${y + h}v4` + (lines[1] ? `M${p} ${lines[0]}v2h4v4h-4v2` : `M${p - 3} ${y + 4}h6`)).join('');
    return `<path class="draw" d="M${x} ${y}h${w}v${h}h${-w}z${lines.map(l => `M${x} ${l}h${w}`).join('')}${d}"/>` +
      `<path class="slant" d="${poles.map(p => `M${p - 5} ${y + 1}L${p} ${lines[0] - 9}`).join('')}"/>` +
      `<path class="draw" stroke-dasharray="5 4" d="M${poles[0] - 2} ${y + 7}H${poles[2]}"/>` +
      poles.map((p, i) => tag(p + 1, y - 1, 2 * i + 1) + tag(p + 1, y + h + 7, 2 * i + 2) + tag(p - 5, y + h - 2, 'I&gt;&gt;')).join('');
  };

  const thumbs = [
    breaker({ h: [13, 26, 4.5], x: 20, y: 31, p: 15.5, n: 3, rh: 7.5 }),
    '<circle class="slant" cx="9" cy="27" r="3"/>' + breaker({ h: [19, 27, 4], x: 26, y: 31, p: 13.5, n: 3, rh: 6.5 }),
    breaker({ h: [10, 29, 2.5], x: 14, y: 32, p: 9.2, n: 3, rh: 4.5, tail: 66, label: 4 }),
    breaker({ h: [13, 30, 3.5], x: 20, y: 34, p: 15.5, n: 3, rows: 'i', rh: 8 }),
    breaker({ h: [10, 30, 3], x: 14, y: 34, p: 9.2, n: 3, rows: 't', rh: 5, tail: 66, label: 4 }),
    breaker({ h: [13, 28, 4], x: 20, y: 34, p: 15, n: 3, rows: 't', rh: 7.5 }),
    breaker({ h: [9, 30, 3], x: 14, y: 37, p: 9.4, n: 3, rows: 'i', rh: 5, tail: 66, label: 4, frame: 11 }),
    breaker({ h: [10, 30, 3], x: 14, y: 37, p: 9.4, n: 3, rows: 'i', rh: 5, tail: 66, label: 4, frame: 11 }),
    block(5, 17, 61, 33, [15, 35, 55], [41]),
    breaker({ h: [9, 28, 3], x: 14, y: 35, p: 9.4, n: 3, rh: 5, tail: 66, label: 4, frame: 10 }),
    block(7, 14, 58, 40, [17, 36, 54], [36, 45]),
    breaker({ h: [9, 29, 2], x: 13, y: 32, p: 8, n: 4, rh: 4, tail: 66, label: 4 }),
    breaker({ h: [11, 27, 3], x: 17, y: 31, p: 12.3, n: 4, rh: 6 }),
    '<path class="draw" d="M15 24h42v20H15zM36 14v41M26 39V29h10"/>' + tag(38, 19, '1', 12) + tag(38, 59, '2', 12),
    breaker({ h: [23, 22, 6], x: 35, y: 29, p: 23, n: 1, rh: 11.5, label: 8 }),
    breaker({ h: [12, 26, 4], x: 19, y: 30, p: 13.5, n: 1, rh: 7, tail: 66 }),
    breaker({ h: [15, 23, 5.5], x: 25, y: 29, p: 21, n: 2, rh: 10, label: 7 }),
    breaker({ h: [10, 28, 3], x: 16, y: 31, p: 11, n: 2, rh: 5.5, tail: 66, label: 4 })
  ];
  document.getElementById('thumbs').innerHTML = thumbs.map((g, i) => `<button class="${i ? '' : 'on'}" aria-label="Symbol ${i + 1}"><svg viewBox="0 0 70 67">${g}</svg></button>`).join('');

  // sheet: grid dots, symbol, wires, device box, cursor
  let dots = '';
  for (let i = 0; i < 80; i++) for (let j = 0; j < 50; j++) dots += `M${Math.round(15 + i * 20.69)} ${Math.round(2 + j * 20.68)}h1v1h-1z`;
  const poles = [243.5, 284.5, 325.5];
  const label = (x, y, str, size, blue) => `<text class="draw-text ${blue || ''}" x="${x}" y="${y}" font-size="${size}" text-anchor="end">${str}</text>`;
  document.getElementById('sheet').innerHTML =
    `<path d="${dots}" fill="#333" shape-rendering="crispEdges"/>` +
    breaker({ h: [202.5, 85.5, 10.5], x: 223, y: 97.5, p: 41, n: 3, rh: 20.5, label: 14 }) +
    label(175, 91, 'QF1', 15, 'blue') +
    `<path d="${poles.map(p => `M${p} 149V271`).join('')}" stroke="#c01818" fill="none" shape-rendering="crispEdges"/>` +
    `<path class="draw" d="M140.500 810V271.500H3000${poles.map(p => `M${p} 271v16`).join('')}"/>` +
    poles.map((p, i) => `<circle class="slant" cx="${p}" cy="292" r="5"/>` + label(p + 6, 309, 'L' + (i + 1), 12)).join('') +
    label(131, 288, '-U1', 15, 'blue') + label(132, 308, '-5.5KW', 12) + label(132, 324, 'Siemens-V20', 12) + label(132, 340, '循环水泵', 14) +
    '<path d="M529.500 0v3000M0 456.500h3000" stroke="#808080" shape-rendering="crispEdges"/>' +
    '<rect x="120" y="58" width="246" height="118" rx="2" fill="none" stroke="#f4433a" stroke-width="4"/>' +
    '<circle cx="390" cy="97" r="14.500" fill="#f4433a"/><text x="390" y="105" font-size="21" fill="#fff" text-anchor="middle" font-weight="500">3</text>';
})();
```
